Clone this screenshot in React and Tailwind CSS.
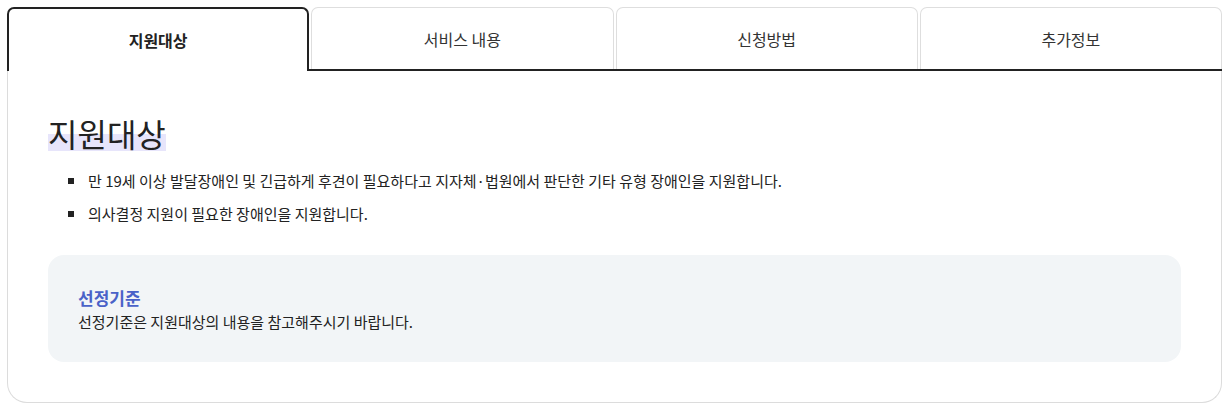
import { useState } from 'react';

const tabs = ['지원대상', '서비스 내용', '신청방법', '추가정보'];

export default function App() {
  const [active, setActive] = useState(0);

  return (
    <div className="bg-white pt-[7px] pl-[7px] pr-[8px] pb-[5px] text-[#222] font-['Noto_Sans_CJK_KR','Noto_Sans',sans-serif]">
      <div className="flex">
        {tabs.map((t, i) =>
          i === active ? (
            <div key={t} className="flex-1">
              <button
                onClick={() => setActive(i)}
                className="w-full h-[64px] border-2 border-b-0 border-[#222] rounded-t-[7px] text-[16px] font-bold bg-white"
              >
                {t}
              </button>
            </div>
          ) : (
            <div key={t} className="flex-1 border-b-2 border-[#222] pl-[2px]">
              <button
                onClick={() => setActive(i)}
                className="w-full h-[62px] border border-b-0 border-[#dedede] rounded-t-[7px] text-[16px] text-[#333] bg-white"
              >
                {t}
              </button>
            </div>
          )
        )}
      </div>
      <div className="border border-t-0 border-[#dcdcdc] rounded-b-[20px] px-[40px] pt-[44px] pb-[40px]">
        <h2 className="inline-block text-[32px] leading-[36px] font-normal bg-[linear-gradient(transparent_53%,#e7e5fb_53%)]">
          지원대상
        </h2>
        <ul className="mt-[17px] flex flex-col gap-[9px] text-[15px] leading-[24px]">
          <li className="flex items-center">
            <span className="w-[6px] h-[6px] bg-[#222] ml-[20px] mr-[14px]" />
            만 19세 이상 발달장애인 및 긴급하게 후견이 필요하다고 지자체·법원에서 판단한 기타 유형 장애인을 지원합니다.
          </li>
          <li className="flex items-center">
            <span className="w-[6px] h-[6px] bg-[#222] ml-[20px] mr-[14px]" />
            의사결정 지원이 필요한 장애인을 지원합니다.
          </li>
        </ul>
        <div className="mt-[29px] bg-[#f2f5f7] rounded-[16px] pl-[30px] pt-[31px] pb-[28px]">
          <p className="text-[17px] leading-[24px] font-bold text-[#4a62c8]">선정기준</p>
          <p className="text-[15px] leading-[24px]">선정기준은 지원대상의 내용을 참고해주시기 바랍니다.</p>
        </div>
      </div>
    </div>
  );
}
